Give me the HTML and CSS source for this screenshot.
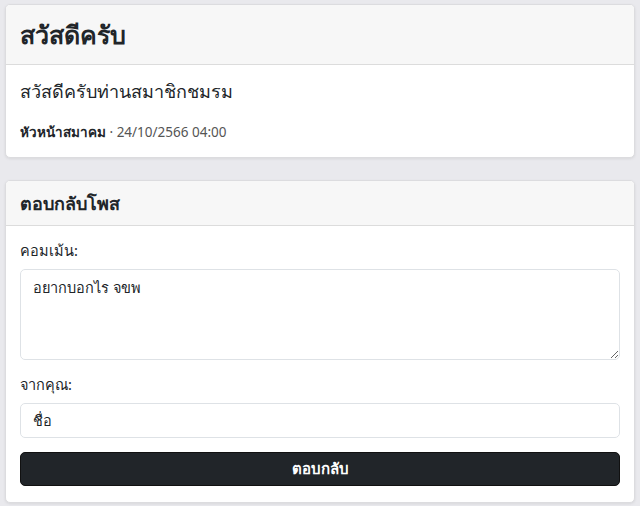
FILE: index.html
```html
<!DOCTYPE html>
<html lang="th">
<head>
<meta charset="utf-8">
<link rel="stylesheet" href="styles.css">
</head>
<body>
<div class="page">
  <section class="card">
    <header class="card-header"><h1 class="title">สวัสดีครับ</h1></header>
    <div class="card-body post">
      <p class="post-text">สวัสดีครับท่านสมาชิกชมรม</p>
      <p class="meta"><strong>หัวหน้าสมาคม</strong> · 24/10/2566 04:00</p>
    </div>
  </section>
  <section class="card">
    <header class="card-header small"><h2 class="subtitle">ตอบกลับโพส</h2></header>
    <form class="card-body form">
      <label class="label" for="c">คอมเม้น:</label>
      <textarea id="c" class="textarea">อยากบอกไร จขพ</textarea>
      <label class="label second" for="n">จากคุณ:</label>
      <input id="n" class="input" type="text" value="ชื่อ">
      <button class="btn" type="button">ตอบกลับ</button>
    </form>
  </section>
</div>
</body>
</html>
```

FILE: styles.css
```css
* { box-sizing: border-box; }
html, body { margin: 0; padding: 0; }
body {
  background: #e9e9ed;
  font-family: "Noto Sans", "Liberation Sans", sans-serif;
  color: #212529;
}
.page {
  padding: 4px 5px;
  display: flex;
  flex-direction: column;
  gap: 22px;
}
.card {
  background: #fff;
  border: 1px solid #dcdcdf;
  border-radius: 5px;
  box-shadow: 0 1px 3px rgba(0,0,0,0.08);
  overflow: hidden;
}
.card-header {
  background: #f7f7f7;
  border-bottom: 1px solid #dcdcdc;
  height: 60px;
  display: flex;
  align-items: center;
  padding: 0 14px;
}
.card-header.small { height: 45px; }
.title { margin: 0; font-size: 25px; font-weight: 700; }
.subtitle { margin: 0; font-size: 18px; font-weight: 600; }
.card-body { padding: 15px 14px; }
.post { padding-top: 13px; padding-bottom: 10px; height: 92px; }
.post-text { margin: 0; font-size: 18px; line-height: 26px; }
.meta { margin: 18px 0 0; font-size: 13.5px; color: #555; line-height: 20px; }
.meta strong { color: #212529; }
.form { display: flex; flex-direction: column; padding: 14px 14px 16px; }
.label { font-size: 14.5px; line-height: 20px; margin-bottom: 9px; }
.label.second { margin-top: 14px; }
.textarea, .input {
  border: 1px solid #dee2e6;
  border-radius: 5px;
  font: inherit;
  font-size: 14.5px;
  color: #212529;
  padding: 6px 12px;
}
.textarea { height: 91px; resize: vertical; }
.input { height: 35px; }
.btn {
  margin-top: 14px;
  height: 34px;
  background: #212529;
  color: #fff;
  border: 1px solid #111;
  border-radius: 5px;
  font: inherit;
  font-size: 15px;
  font-weight: 700;
}
```
